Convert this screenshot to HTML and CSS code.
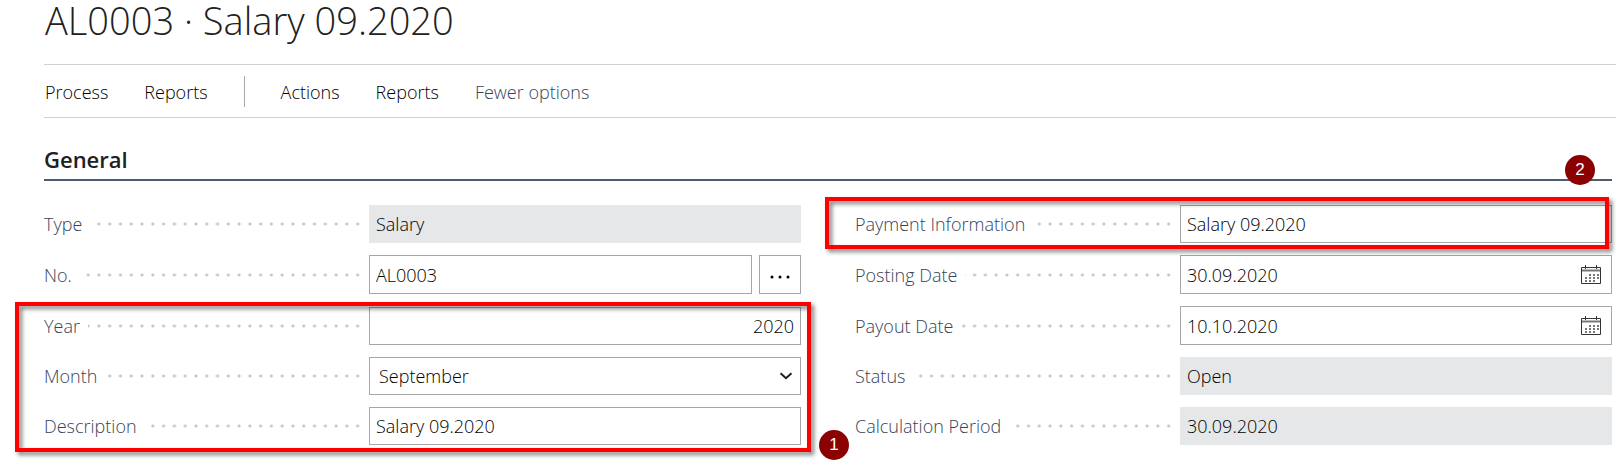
FILE: index.html
```html
<!DOCTYPE html>
<html lang="en">
<head>
<meta charset="utf-8">
<title>AL0003 · Salary 09.2020</title>
<link rel="stylesheet" href="styles.css">
</head>
<body>
<main class="page">
  <h1 class="page-title">AL0003 · Salary 09.2020</h1>

  <nav class="toolbar" aria-label="Page actions">
    <button class="tool" type="button">Process</button>
    <button class="tool" type="button">Reports</button>
    <span class="divider"></span>
    <button class="tool" type="button">Actions</button>
    <button class="tool" type="button">Reports</button>
    <button class="tool tool-muted" type="button">Fewer options</button>
  </nav>

  <section class="section">
    <h2 class="section-title">General</h2>

    <form class="fields">
      <div class="column column-main">
        <div class="field">
          <div class="leader"><label class="label" for="type">Type</label></div>
          <input class="control readonly" id="type" value="Salary" readonly>
        </div>
        <div class="field">
          <div class="leader"><label class="label" for="no">No.</label></div>
          <div class="assist">
            <input class="control" id="no" value="AL0003">
            <button class="more" type="button" aria-label="Edit number">
              <svg width="20" height="4" viewBox="0 0 20 4"><circle cx="2" cy="2" r="1.5"/><circle cx="10" cy="2" r="1.5"/><circle cx="18" cy="2" r="1.5"/></svg>
            </button>
          </div>
        </div>
        <div class="field">
          <div class="leader"><label class="label" for="year">Year</label></div>
          <input class="control numeric" id="year" value="2020">
        </div>
        <div class="field">
          <div class="leader"><label class="label" for="month">Month</label></div>
          <div class="picker">
            <select class="control" id="month"><option>September</option></select>
            <svg class="chevron" width="14" height="8" viewBox="0 0 14 8"><path d="M1.5 1.2 7 6.2l5.500-5"/></svg>
          </div>
        </div>
        <div class="field">
          <div class="leader"><label class="label" for="description">Description</label></div>
          <input class="control" id="description" value="Salary 09.2020">
        </div>
      </div>

      <div class="column column-side">
        <div class="field">
          <div class="leader"><label class="label" for="payment">Payment Information</label></div>
          <input class="control" id="payment" value="Salary 09.2020">
        </div>
        <div class="field">
          <div class="leader"><label class="label" for="posting">Posting Date</label></div>
          <div class="date">
            <input class="date-input" id="posting" value="30.09.2020">
            <button class="date-button" type="button" aria-label="Choose posting date">
              <svg width="20" height="20" viewBox="0 0 20 20"><path class="frame" d="M.5 2.500h19v16H.5z"/><path class="bar" d="M1 5.500h18"/><path class="frame" d="M4.500 0v4M15.500 0v4"/><path class="days" d="M8 10h10M4 13h14M4 16h10"/></svg>
            </button>
          </div>
        </div>
        <div class="field">
          <div class="leader"><label class="label" for="payout">Payout Date</label></div>
          <div class="date">
            <input class="date-input" id="payout" value="10.10.2020">
            <button class="date-button" type="button" aria-label="Choose payout date">
              <svg width="20" height="20" viewBox="0 0 20 20"><path class="frame" d="M.5 2.500h19v16H.5z"/><path class="bar" d="M1 5.500h18"/><path class="frame" d="M4.500 0v4M15.500 0v4"/><path class="days" d="M8 10h10M4 13h14M4 16h10"/></svg>
            </button>
          </div>
        </div>
        <div class="field">
          <div class="leader"><label class="label" for="status">Status</label></div>
          <input class="control readonly" id="status" value="Open" readonly>
        </div>
        <div class="field">
          <div class="leader"><label class="label" for="period">Calculation Period</label></div>
          <input class="control readonly" id="period" value="30.09.2020" readonly>
        </div>
      </div>

      <div class="callout callout-period"><div class="outline"></div><span class="badge badge-end">1</span></div>
      <div class="callout callout-payment"><div class="outline"></div><span class="badge badge-top">2</span></div>
    </form>
  </section>
</main>
</body>
</html>
```
FILE: styles.css
```css
* {
  box-sizing: border-box;
}

body {
  margin: 0;
  background: #fff;
  color: #000;
  font: 300 18px/24px "Open Sans", "Noto Sans", sans-serif;
  overflow-x: hidden;
}

button,
input,
select {
  font: inherit;
  color: inherit;
}

.page {
  padding-left: 44px;
}

.page-title {
  margin: 0;
  padding: 0 1px 24px;
  color: #212121;
  font-size: 38px;
  font-weight: 300;
  line-height: 40px;
}

.toolbar {
  display: flex;
  align-items: center;
  gap: 36px;
  height: 54px;
  padding: 1px 1px 0;
  border-top: 1px solid #d0d1d6;
  border-bottom: 1px solid #d0d1d6;
}

.tool {
  padding: 0;
  border: 0;
  background: none;
}

.tool-muted {
  color: #364459;
}

.divider {
  width: 1px;
  height: 31px;
  background: #a6a8ad;
}

.section {
  padding-right: 4px;
}

.section-title {
  margin: 0;
  padding: 25px 0 4px;
  border-bottom: 2px solid #505c6d;
  color: #212121;
  font-size: 22px;
  font-weight: 600;
  line-height: 32px;
}

.fields {
  display: grid;
  grid-template-columns: 1fr 1fr;
  grid-template-rows: repeat(5, auto);
  gap: 12px 54px;
  padding: 24px 0 16px;
}

.column {
  display: grid;
  grid-template-rows: subgrid;
}

.column-main {
  grid-area: 1 / 1 / 6 / 2;
}

.column-side {
  grid-area: 1 / 2 / 6 / 3;
}

.field {
  display: grid;
  grid-template-columns: 325fr 432fr;
  align-items: center;
}

/* Dotted line that runs from the label to its control */
.leader {
  margin-right: 9px;
  padding-right: 3px;
  background-image: radial-gradient(circle at calc(100% - 2px) 50%, #c4c6ca 1px, transparent 2px);
  background-origin: content-box;
  background-position: 3px center;
  background-size: calc(100% / 29) 100%;
}

.label {
  display: inline-block;
  padding-right: 8px;
  background: #fff;
  color: #364459;
}

.control {
  width: 100%;
  min-width: 0;
  height: 38px;
  padding: 0 6px;
  border: 1px solid #a6a6a6;
  border-radius: 0;
  background: #fff;
}

.readonly {
  border-color: #e5e7e9;
  background: #e5e7e9;
}

.numeric {
  text-align: right;
}

.assist {
  display: flex;
  gap: 7px;
  height: 39px;
}

.assist .control {
  height: 100%;
}

.more {
  flex: 0 0 42px;
  padding: 0;
  border: 1px solid #a6a6a6;
  background: #fff;
}

.more svg {
  display: block;
  margin: 5px auto 0;
}

.picker {
  display: grid;
  align-items: center;
}

.picker > * {
  grid-area: 1 / 1;
}

.picker .control {
  padding: 0 9px;
  appearance: none;
}

.chevron {
  justify-self: end;
  margin-right: 8px;
  fill: none;
  stroke: #212121;
  stroke-width: 2;
  pointer-events: none;
}

.date {
  display: flex;
  align-items: center;
  height: 39px;
  border: 1px solid #a6a6a6;
}

.date-input {
  flex: 1;
  min-width: 0;
  padding: 0 6px;
  border: 0;
  background: none;
}

.date-button {
  padding: 0 10px;
  border: 0;
  background: none;
}

.date-button svg {
  display: block;
  fill: none;
}

.frame {
  stroke: #333;
}

.bar {
  stroke: #777;
  stroke-width: 2;
}

.days {
  stroke: #777;
  stroke-width: 2;
  stroke-dasharray: 2 2;
}

/* Red outlines with numbered badges, drawn over the form */
.callout {
  position: relative;
  z-index: 1;
  pointer-events: none;
}

.outline {
  height: 100%;
  border: 4px solid #f00;
  filter: drop-shadow(3px 3px 2px rgba(0, 0, 0, 0.5));
}

.callout-period {
  grid-area: 3 / 1 / 6 / 2;
  margin: -4px -10px -7px -29px;
}

.callout-payment {
  grid-area: 1 / 2;
  margin: -8px 3px -6px -30px;
}

.badge {
  position: absolute;
  width: 30px;
  height: 30px;
  border-radius: 50%;
  background: #8b0000;
  color: #fff;
  font: 400 17px/30px "Liberation Sans", sans-serif;
  text-align: center;
}

.badge-end {
  right: -38px;
  bottom: -8px;
}

.badge-top {
  top: -42px;
  right: 14px;
}
```
